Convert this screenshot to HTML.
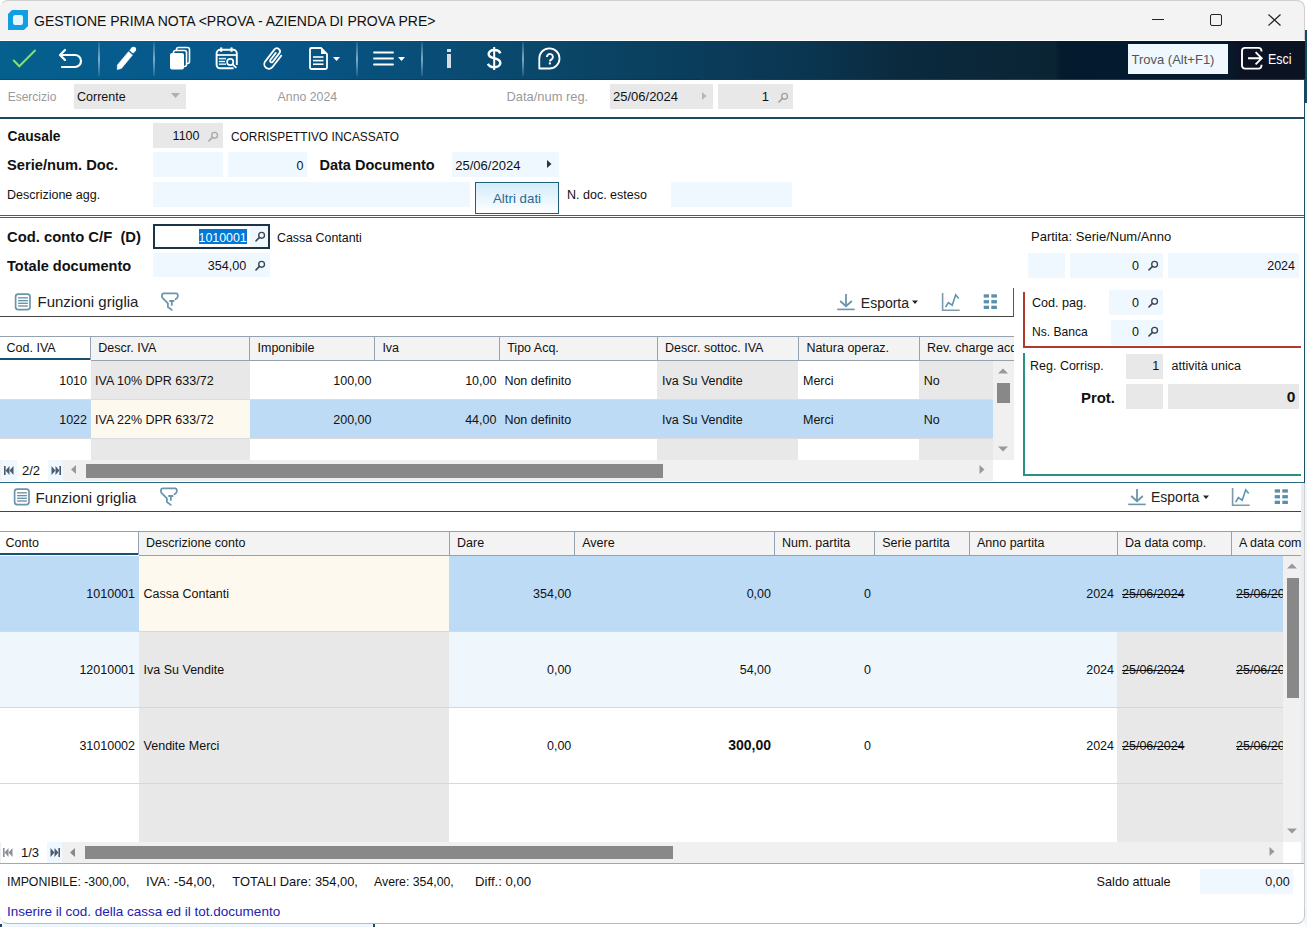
<!DOCTYPE html>
<html><head><meta charset="utf-8"><style>
*{margin:0;padding:0;box-sizing:border-box}
html,body{width:1307px;height:927px;overflow:hidden;background:#fff}
body{position:relative;font-family:"Liberation Sans",sans-serif}
.a{position:absolute}
.t{position:absolute;white-space:nowrap;line-height:1;font-family:"Liberation Sans",sans-serif}
svg{display:block}
</style></head><body>
<div class="a" style="left:1304px;top:30px;width:3px;height:73px;background:#164862"></div>
<div class="a" style="left:1304px;top:103px;width:3px;height:824px;background:#eef7fd"></div>
<div class="a" style="left:0;top:0;width:1305px;height:41px;background:#f3f3f3;border:1px solid #cfcfcf;border-left-color:transparent;border-bottom:none;border-radius:8px 8px 0 0"></div>
<div class="a" style="left:0px;top:40px;width:1305px;height:1px;background:#ffffff"></div>
<svg class="a" style="left:8px;top:10px" width="20" height="20" viewBox="0 0 20 20"><path d="M4 0H20V16L16 20H0V4Z" fill="#129ee2"/><rect x="5" y="5" width="10" height="10" rx="2.2" fill="#e6f6ff"/></svg>
<div class="t" style="left:34px;top:14px;font-size:14px;color:#111;">GESTIONE PRIMA NOTA &lt;PROVA - AZIENDA DI PROVA PRE&gt;</div>
<div class="a" style="left:1152px;top:19px;width:12px;height:1px;background:#222"></div>
<div class="a" style="left:1210px;top:14px;width:12px;height:12px;border:1.3px solid #222;border-radius:2px"></div>
<svg class="a" style="left:1268px;top:14px" width="13" height="12" viewBox="0 0 13 12"><path d="M0.5 0.5L12.5 11.5M12.5 0.5L0.5 11.5" stroke="#222" stroke-width="1.2"/></svg>
<div class="a" style="left:0;top:41px;width:1305px;height:39px;background:linear-gradient(90deg,#05608e 0px,#07578a 250px,#0a4668 560px,#0a3652 800px,#0b2a3e 900px,#0a2434 1055px,#041b2e 1060px,#031a30 1128px,#061a2e 1228px,#0b1323 1240px,#0b1323 1305px)"></div>
<div class="a" style="left:0px;top:79px;width:700px;height:1px;background:rgba(0,30,60,0.25)"></div>
<div class="a" style="left:700px;top:79px;width:605px;height:1px;background:linear-gradient(90deg,rgba(20,90,115,0),rgba(20,90,115,0.7) 300px)"></div>
<div class="a" style="left:97.5px;top:42px;width:2px;height:34px;background:linear-gradient(180deg,rgba(150,190,215,0.15),rgba(160,200,225,0.75) 50%,rgba(150,190,215,0.15))"></div>
<div class="a" style="left:152.5px;top:42px;width:2px;height:34px;background:linear-gradient(180deg,rgba(150,190,215,0.15),rgba(160,200,225,0.75) 50%,rgba(150,190,215,0.15))"></div>
<div class="a" style="left:355.5px;top:42px;width:2px;height:34px;background:linear-gradient(180deg,rgba(150,190,215,0.15),rgba(160,200,225,0.75) 50%,rgba(150,190,215,0.15))"></div>
<div class="a" style="left:420.5px;top:42px;width:2px;height:34px;background:linear-gradient(180deg,rgba(150,190,215,0.15),rgba(160,200,225,0.75) 50%,rgba(150,190,215,0.15))"></div>
<div class="a" style="left:521.5px;top:42px;width:2px;height:34px;background:linear-gradient(180deg,rgba(150,190,215,0.15),rgba(160,200,225,0.75) 50%,rgba(150,190,215,0.15))"></div>
<svg class="a" style="left:12px;top:48px" width="26" height="22" viewBox="0 0 26 22"><path d="M1.8 12.5L7.3 18.2L23 2.5" fill="none" stroke="#80de72" stroke-width="2.1" stroke-linecap="round"/></svg>
<svg class="a" style="left:58px;top:48px" width="26" height="22" viewBox="0 0 26 22"><path d="M7 2L2 7L7 12M2 7H17A6 6 0 0 1 17 19H4" fill="none" stroke="#fff" stroke-width="2.2" stroke-linecap="round" stroke-linejoin="round"/></svg>
<svg class="a" style="left:115px;top:46px" width="22" height="25" viewBox="0 0 22 25"><path d="M2.3 23.5L2.4 19L13.5 5.7L17.5 9.1L6.4 22.4Z" fill="#fff" stroke="#fff" stroke-width="0.6" stroke-linejoin="round"/><line x1="16.3" y1="6.0" x2="18.6" y2="3.2" stroke="#fff" stroke-width="5"/><circle cx="18.6" cy="3.2" r="2.5" fill="#fff"/></svg>
<svg class="a" style="left:168px;top:46px" width="26" height="25" viewBox="0 0 26 25"><rect x="8.5" y="1.5" width="13" height="16" rx="2" fill="none" stroke="#fff" stroke-width="1.6"/><rect x="5.5" y="4.5" width="13" height="16" rx="2" fill="#0a5482" stroke="#fff" stroke-width="1.6"/><rect x="2" y="7" width="14" height="16.5" rx="2" fill="#fff"/></svg>
<svg class="a" style="left:214px;top:46px" width="26" height="25" viewBox="0 0 26 25"><path d="M22.8 19V7.3A3.5 3.5 0 0 0 19.3 3.8H6.1A3.5 3.5 0 0 0 2.6 7.3V18.8A3.5 3.5 0 0 0 6.1 22.3H19.5" fill="none" stroke="#fff" stroke-width="1.9"/><line x1="2.6" y1="9" x2="22.8" y2="9" stroke="#fff" stroke-width="1.7"/><line x1="7.2" y1="1.4" x2="7.2" y2="5.8" stroke="#fff" stroke-width="2.1"/><line x1="17.5" y1="1.4" x2="17.5" y2="5.8" stroke="#fff" stroke-width="2.1"/><line x1="4.9" y1="12.6" x2="12" y2="12.6" stroke="#dfeef6" stroke-width="1.6"/><line x1="4.9" y1="15.5" x2="11" y2="15.5" stroke="#fff" stroke-width="1.4"/><line x1="4.9" y1="18.2" x2="12" y2="18.2" stroke="#c4e8f8" stroke-width="1.6"/><circle cx="16.2" cy="16" r="3.1" fill="none" stroke="#fff" stroke-width="1.7"/><line x1="18.6" y1="18.4" x2="22.4" y2="21.8" stroke="#fff" stroke-width="1.8"/></svg>
<svg class="a" style="left:258px;top:44px" width="30" height="30" viewBox="0 0 30 30"><path d="M23.3 11.6L14.33 23.21A4.6 4.6 0 0 1 7.07 17.59L16.52 5.35A3.1 3.1 0 0 1 21.42 9.13L14.71 17.82A1.5 1.5 0 0 1 12.34 15.99L17.83 8.88" fill="none" stroke="#fff" stroke-width="1.8" stroke-linecap="round"/></svg>
<svg class="a" style="left:308px;top:46px" width="34" height="25" viewBox="0 0 34 25"><path d="M3.5 2H13L19 8V21.5A1.5 1.5 0 0 1 17.5 23H3.5A1.5 1.5 0 0 1 2 21.5V3.5A1.5 1.5 0 0 1 3.5 2Z" fill="none" stroke="#fff" stroke-width="1.8"/><path d="M13 2V8H19Z" fill="#fff"/><line x1="5" y1="11" x2="15.5" y2="11" stroke="#fff" stroke-width="1.6"/><line x1="5" y1="14.6" x2="15.5" y2="14.6" stroke="#fff" stroke-width="1.6"/><line x1="5" y1="18.2" x2="15.5" y2="18.2" stroke="#fff" stroke-width="1.6"/><path d="M25 11H32L28.5 15Z" fill="#fff"/></svg>
<svg class="a" style="left:372px;top:46px" width="36" height="25" viewBox="0 0 36 25"><line x1="2" y1="6.5" x2="21" y2="6.5" stroke="#fff" stroke-width="1.8" stroke-linecap="round"/><line x1="2" y1="12.5" x2="21" y2="12.5" stroke="#fff" stroke-width="1.8" stroke-linecap="round"/><line x1="2" y1="18.5" x2="21" y2="18.5" stroke="#fff" stroke-width="1.8" stroke-linecap="round"/><path d="M26 11H33L29.5 15Z" fill="#fff"/></svg>
<div class="a" style="left:447px;top:49px;width:4px;height:3px;background:#d4dde6"></div>
<div class="a" style="left:447px;top:54px;width:4px;height:14px;background:#d4dde6"></div>
<svg class="a" style="left:487px;top:47px" width="15" height="24" viewBox="0 0 15 24"><line x1="7.2" y1="0" x2="7.2" y2="23" stroke="#fff" stroke-width="2"/><path d="M13.3 6.3C12.5 4 10 3 7.2 3C3.8 3 1.7 4.7 1.7 7C1.7 9.7 4.2 10.6 7.2 11.3C10.6 12 13.3 13.2 13.3 16C13.3 18.6 10.6 20.2 7.2 20.2C4 20.2 1.8 19 0.9 16.8" fill="none" stroke="#fff" stroke-width="2.5"/></svg>
<svg class="a" style="left:537px;top:46px" width="26" height="25" viewBox="0 0 26 25"><path d="M2.3 22.5V12.4A10.1 10.1 0 1 1 12.4 22.5Z" fill="none" stroke="#fff" stroke-width="1.8" stroke-linejoin="round"/><path d="M9.9 10.9A3 3 0 1 1 14.6 13.4C13.5 14 12.9 14.4 12.9 15.6" fill="none" stroke="#fff" stroke-width="1.9"/><circle cx="12.9" cy="17.5" r="1.15" fill="#fff"/></svg>
<div class="a" style="left:1128px;top:44px;width:100px;height:30px;background:#f0f8ff"></div>
<div class="t" style="left:1131.5px;top:53px;font-size:13px;color:#555;">Trova (Alt+F1)</div>
<svg class="a" style="left:1240px;top:46px" width="24" height="25" viewBox="0 0 24 25"><path d="M21.5 5.6V4.9A3 3 0 0 0 18.5 1.9H5A3 3 0 0 0 2 4.9V19.6A3 3 0 0 0 5 22.6H18.5A3 3 0 0 0 21.5 19.6V18.8" fill="none" stroke="#fff" stroke-width="1.9"/><path d="M8 12.3H21.5M15.6 6.2L21.7 12.3L15.6 18.4" fill="none" stroke="#fff" stroke-width="1.9"/></svg>
<div class="t" style="left:1268px;top:51px;font-size:15px;color:#fff;transform:scaleX(0.83);transform-origin:left">Esci</div>
<div class="t" style="left:7.7px;top:91px;font-size:12px;color:#9a9a9a;">Esercizio</div>
<div class="a" style="left:74px;top:84px;width:112px;height:25px;background:#e8e8e8"></div>
<div class="t" style="left:77px;top:91px;font-size:12.5px;color:#111;">Corrente</div>
<svg class="a" style="left:171px;top:93px" width="10" height="6"><path d="M0 0H9L4.5 5Z" fill="#b0b0b0"/></svg>
<div class="t" style="left:277.6px;top:91px;font-size:12.3px;color:#9a9a9a;">Anno 2024</div>
<div class="t" style="left:506.5px;top:91px;font-size:12.9px;color:#9a9a9a;">Data/num reg.</div>
<div class="a" style="left:610px;top:84px;width:103px;height:25px;background:#e8e8e8"></div>
<div class="t" style="left:613px;top:90px;font-size:13px;color:#111;">25/06/2024</div>
<svg class="a" style="left:702px;top:92px" width="5" height="9"><path d="M0 0V8L4.5 4Z" fill="#b8b8b8"/></svg>
<div class="a" style="left:718px;top:84px;width:75px;height:25px;background:#e8e8e8"></div>
<div class="t" style="right:538px;top:90px;font-size:13px;color:#111;">1</div>
<div class="a" style="left:778px;top:91px;width:12px;height:12px"><svg width="12" height="12" viewBox="0 0 12 12"><circle cx="6.6" cy="5.3" r="2.9" fill="none" stroke="#a0a0a0" stroke-width="1.35"/><line x1="4.5" y1="7.4" x2="1" y2="10.9" stroke="#a0a0a0" stroke-width="1.5" stroke-linecap="round"/></svg></div>
<div class="a" style="left:0px;top:117px;width:1304px;height:2px;background:#1d4a60"></div>
<div class="a" style="left:1304px;top:102px;width:1px;height:381px;background:#1d4a60"></div>
<div class="a" style="left:1301px;top:483px;width:4px;height:381px;background:#ececec"></div>
<div class="t" style="left:7.5px;top:130px;font-size:13.8px;color:#111;font-weight:bold;">Causale</div>
<div class="a" style="left:153px;top:123px;width:70px;height:25px;background:#e8e8e8"></div>
<div class="t" style="right:1107.5px;top:130px;font-size:12.5px;color:#111;">1100</div>
<div class="a" style="left:208px;top:130px;width:12px;height:12px"><svg width="12" height="12" viewBox="0 0 12 12"><circle cx="6.6" cy="5.3" r="2.9" fill="none" stroke="#a8a8a8" stroke-width="1.35"/><line x1="4.5" y1="7.4" x2="1" y2="10.9" stroke="#a8a8a8" stroke-width="1.5" stroke-linecap="round"/></svg></div>
<div class="t" style="left:231px;top:132px;font-size:11.9px;color:#111;">CORRISPETTIVO INCASSATO</div>
<div class="t" style="left:7px;top:158px;font-size:14.7px;color:#111;font-weight:bold;">Serie/num. Doc.</div>
<div class="a" style="left:153px;top:152px;width:70px;height:25px;background:#f0f8ff"></div>
<div class="a" style="left:228px;top:152px;width:79px;height:25px;background:#f0f8ff"></div>
<div class="t" style="right:1003.5px;top:160px;font-size:12.5px;color:#111;">0</div>
<div class="t" style="left:319.5px;top:158px;font-size:14.5px;color:#111;font-weight:bold;">Data Documento</div>
<div class="a" style="left:452px;top:152px;width:107px;height:25px;background:#f0f8ff"></div>
<div class="t" style="left:455.3px;top:159px;font-size:13px;color:#111;">25/06/2024</div>
<svg class="a" style="left:547px;top:160px" width="5" height="9"><path d="M0 0V8L4.5 4Z" fill="#333"/></svg>
<div class="t" style="left:7px;top:189px;font-size:12.5px;color:#111;">Descrizione agg.</div>
<div class="a" style="left:153px;top:182px;width:317px;height:25px;background:#f0f8ff"></div>
<div class="a" style="left:475px;top:182px;width:84px;height:32px;border:1px solid #1f5f7a;background:linear-gradient(180deg,#d3ebfa,#ffffff)"></div>
<div class="t" style="left:493px;top:192px;font-size:13.3px;color:#2a6a90;">Altri dati</div>
<div class="t" style="left:567px;top:189px;font-size:12.5px;color:#111;">N. doc. esteso</div>
<div class="a" style="left:671px;top:182px;width:121px;height:25px;background:#f0f8ff"></div>
<div class="a" style="left:0px;top:215px;width:1304px;height:1px;background:#2a6a80"></div>
<div class="a" style="left:0px;top:217px;width:1304px;height:1px;background:#2a6a80"></div>
<div class="t" style="left:7px;top:230px;font-size:14.8px;color:#111;font-weight:bold;">Cod. conto C/F&nbsp;&nbsp;(D)</div>
<div class="a" style="left:153px;top:224px;width:117px;height:25px;border:2px solid #1c3448;background:#fff"></div>
<div class="a" style="left:250px;top:226px;width:18px;height:21px;background:#f0f8ff"></div>
<div class="a" style="left:198.5px;top:229px;width:48.2px;height:15px;background:#0078d7"></div>
<div class="t" style="left:198.5px;top:232px;font-size:12.4px;color:#fff;">1010001</div>
<div class="a" style="left:255px;top:230px;width:12px;height:12px"><svg width="12" height="12" viewBox="0 0 12 12"><circle cx="6.6" cy="5.3" r="2.9" fill="none" stroke="#3a4452" stroke-width="1.35"/><line x1="4.5" y1="7.4" x2="1" y2="10.9" stroke="#3a4452" stroke-width="1.5" stroke-linecap="round"/></svg></div>
<div class="t" style="left:277px;top:232px;font-size:12.4px;color:#111;">Cassa Contanti</div>
<div class="t" style="left:7px;top:259px;font-size:14.56px;color:#111;font-weight:bold;">Totale documento</div>
<div class="a" style="left:153px;top:253px;width:117px;height:24px;background:#f0f8ff"></div>
<div class="t" style="right:1060.7px;top:260px;font-size:12.6px;color:#111;">354,00</div>
<div class="a" style="left:255px;top:259px;width:12px;height:12px"><svg width="12" height="12" viewBox="0 0 12 12"><circle cx="6.6" cy="5.3" r="2.9" fill="none" stroke="#3a4452" stroke-width="1.35"/><line x1="4.5" y1="7.4" x2="1" y2="10.9" stroke="#3a4452" stroke-width="1.5" stroke-linecap="round"/></svg></div>
<div class="t" style="left:1031px;top:230px;font-size:13px;color:#111;">Partita: Serie/Num/Anno</div>
<div class="a" style="left:1028px;top:253px;width:37px;height:25px;background:#f0f8ff"></div>
<div class="a" style="left:1070px;top:253px;width:93px;height:25px;background:#f0f8ff"></div>
<div class="t" style="right:168px;top:260px;font-size:12.5px;color:#111;">0</div>
<div class="a" style="left:1148px;top:259px;width:12px;height:12px"><svg width="12" height="12" viewBox="0 0 12 12"><circle cx="6.6" cy="5.3" r="2.9" fill="none" stroke="#3a4452" stroke-width="1.35"/><line x1="4.5" y1="7.4" x2="1" y2="10.9" stroke="#3a4452" stroke-width="1.5" stroke-linecap="round"/></svg></div>
<div class="a" style="left:1168px;top:253px;width:131px;height:25px;background:#f0f8ff"></div>
<div class="t" style="right:12px;top:260px;font-size:12.5px;color:#111;">2024</div>
<div class="a" style="left:0;top:288px;width:1014px;height:29px;border-right:1px solid #555;border-bottom:1px solid #444"></div>
<div class="a" style="left:12px;top:291px;line-height:0"><svg width="22" height="22" viewBox="0 0 22 22"><rect x="3.6" y="3.1" width="14.4" height="15.5" rx="2.6" fill="none" stroke="#6b95aa" stroke-width="1.7"/><rect x="6.1" y="9.5" width="9.8" height="2.9" fill="#c4e6f7"/><line x1="6.1" y1="6.8" x2="15.9" y2="6.8" stroke="#7f9aaa" stroke-width="1.5"/><line x1="6.1" y1="9.5" x2="15.9" y2="9.5" stroke="#6b8ea2" stroke-width="1.1"/><line x1="6.1" y1="12.4" x2="15.9" y2="12.4" stroke="#6b8ea2" stroke-width="1.1"/><line x1="6.1" y1="15" x2="15.9" y2="15" stroke="#7f9aaa" stroke-width="1.5"/></svg></div>
<div class="t" style="left:37.5px;top:294px;font-size:15px;color:#222;">Funzioni griglia</div>
<div class="a" style="left:160px;top:291px;line-height:0"><svg width="20" height="22" viewBox="0 0 20 22"><path d="M15.5 8.2C17 7.2 17.8 6.5 17.8 5.4V4.3C17.8 3.2 17.2 2.3 16 2.3H3.8C2.7 2.3 2 3.2 2 4.3V5.8C2 6.2 2.2 6.5 2.5 6.8L7.9 12.4V16L11.8 18.9" fill="none" stroke="#6b95aa" stroke-width="1.8" stroke-linecap="round" stroke-linejoin="round"/><path d="M9.3 10H14.3M11.8 10V14.7" fill="none" stroke="#6b95aa" stroke-width="1.8"/></svg></div>
<div class="a" style="left:837px;top:291px;line-height:0"><svg width="20" height="20" viewBox="0 0 20 20"><path d="M9 3V15M3.2 10L9 15.2L14.8 10" fill="none" stroke="#6b95aa" stroke-width="1.8"/><line x1="0.2" y1="18.4" x2="17.7" y2="18.4" stroke="#6b95aa" stroke-width="1.6"/></svg></div>
<div class="t" style="left:860.8px;top:296px;font-size:14px;color:#222;">Esporta</div>
<svg class="a" style="left:912px;top:300px" width="7" height="5"><path d="M0 0.5H6L3 4Z" fill="#222"/></svg>
<div class="a" style="left:940px;top:291px;line-height:0"><svg width="20" height="20" viewBox="0 0 20 20"><path d="M2.6 2V19.2H19.7" fill="none" stroke="#7d9aab" stroke-width="1.6"/><path d="M5.6 16.2L8.4 11.6L12.2 14.2L15.7 3.8L18.7 7.6" fill="none" stroke="#5a94b0" stroke-width="1.6"/></svg></div>
<div class="a" style="left:983px;top:293px;line-height:0"><svg width="16" height="18" viewBox="0 0 16 18"><g fill="#5a90aa"><rect x="0.7" y="1.3" width="5.3" height="3.3"/><rect x="8.3" y="1.3" width="5.6" height="3.3"/><rect x="0.7" y="7.1" width="5.3" height="3.3"/><rect x="8.3" y="7.1" width="5.6" height="3.3"/><rect x="0.7" y="12.7" width="5.3" height="3.3"/><rect x="8.3" y="12.7" width="5.6" height="3.3"/></g></svg></div>
<div class="a" style="left:1023px;top:292px;width:278px;height:56px;border-left:2px solid #b03a2e;border-bottom:2px solid #b03a2e"></div>
<div class="t" style="left:1032px;top:297px;font-size:12.6px;color:#111;">Cod. pag.</div>
<div class="a" style="left:1109px;top:290px;width:54px;height:25px;background:#f0f8ff"></div>
<div class="t" style="right:168px;top:297px;font-size:12.5px;color:#111;">0</div>
<div class="a" style="left:1148px;top:296px;width:12px;height:12px"><svg width="12" height="12" viewBox="0 0 12 12"><circle cx="6.6" cy="5.3" r="2.9" fill="none" stroke="#3a4452" stroke-width="1.35"/><line x1="4.5" y1="7.4" x2="1" y2="10.9" stroke="#3a4452" stroke-width="1.5" stroke-linecap="round"/></svg></div>
<div class="t" style="left:1032px;top:326px;font-size:12.1px;color:#111;">Ns. Banca</div>
<div class="a" style="left:1111px;top:320px;width:52px;height:25px;background:#f0f8ff"></div>
<div class="t" style="right:168px;top:326px;font-size:12.5px;color:#111;">0</div>
<div class="a" style="left:1148px;top:325px;width:12px;height:12px"><svg width="12" height="12" viewBox="0 0 12 12"><circle cx="6.6" cy="5.3" r="2.9" fill="none" stroke="#3a4452" stroke-width="1.35"/><line x1="4.5" y1="7.4" x2="1" y2="10.9" stroke="#3a4452" stroke-width="1.5" stroke-linecap="round"/></svg></div>
<div class="a" style="left:1023px;top:353px;width:278px;height:123px;border-left:2px solid #2a9080;border-bottom:2px solid #2a9080"></div>
<div class="t" style="left:1030px;top:360px;font-size:12.5px;color:#111;">Reg. Corrisp.</div>
<div class="a" style="left:1126px;top:354px;width:37px;height:25px;background:#e8e8e8"></div>
<div class="t" style="right:147.70000000000005px;top:360px;font-size:12.5px;color:#111;">1</div>
<div class="t" style="left:1171.5px;top:360px;font-size:12.5px;color:#111;">attivit&agrave; unica</div>
<div class="t" style="left:1081px;top:391px;font-size:14.9px;color:#111;font-weight:bold;">Prot.</div>
<div class="a" style="left:1126px;top:384px;width:37px;height:25px;background:#e8e8e8"></div>
<div class="a" style="left:1168px;top:384px;width:131px;height:25px;background:#e8e8e8"></div>
<div class="t" style="right:11.700000000000045px;top:389px;font-size:15.5px;color:#111;font-weight:bold;">0</div>
<div class="a" style="left:0px;top:336px;width:1014px;height:1px;background:#94a2b2"></div>
<div class="a" style="left:0px;top:337px;width:1014px;height:23px;background:#f3f3f3"></div>
<div class="a" style="left:0px;top:337px;width:91px;height:23px;background:#fff"></div>
<div class="a" style="left:0px;top:358px;width:90px;height:2px;background:#145070"></div>
<div class="a" style="left:91px;top:360px;width:923px;height:1px;background:#94a2b2"></div>
<div class="a" style="left:90px;top:337px;width:1px;height:23px;background:#94a2b2"></div>
<div class="a" style="left:249px;top:337px;width:1px;height:23px;background:#94a2b2"></div>
<div class="a" style="left:374px;top:337px;width:1px;height:23px;background:#94a2b2"></div>
<div class="a" style="left:499px;top:337px;width:1px;height:23px;background:#94a2b2"></div>
<div class="a" style="left:657px;top:337px;width:1px;height:23px;background:#94a2b2"></div>
<div class="a" style="left:798px;top:337px;width:1px;height:23px;background:#94a2b2"></div>
<div class="a" style="left:919px;top:337px;width:1px;height:23px;background:#94a2b2"></div>
<div class="a" style="left:0;top:337px;width:1014px;height:23px;overflow:hidden">
<div class="t" style="left:6.6px;top:5px;font-size:12.5px;color:#111">Cod. IVA</div>
<div class="t" style="left:98.3px;top:5px;font-size:12.5px;color:#111">Descr. IVA</div>
<div class="t" style="left:257.5px;top:5px;font-size:12.5px;color:#111">Imponibile</div>
<div class="t" style="left:382.4px;top:5px;font-size:12.5px;color:#111">Iva</div>
<div class="t" style="left:507.2px;top:5px;font-size:12.5px;color:#111">Tipo Acq.</div>
<div class="t" style="left:665px;top:5px;font-size:12.5px;color:#111">Descr. sottoc. IVA</div>
<div class="t" style="left:806.4px;top:5px;font-size:12.5px;color:#111">Natura operaz.</div>
<div class="t" style="left:927px;top:5px;font-size:12.5px;color:#111">Rev. charge acq</div>
</div>
<div class="a" style="left:0px;top:361px;width:993px;height:38px;background:#fff"></div>
<div class="a" style="left:91px;top:361px;width:159px;height:38px;background:#e8e8e8"></div>
<div class="a" style="left:657px;top:361px;width:141px;height:38px;background:#e8e8e8"></div>
<div class="a" style="left:919px;top:361px;width:74px;height:38px;background:#e8e8e8"></div>
<div class="a" style="left:0px;top:400px;width:993px;height:38px;background:#bedbf6"></div>
<div class="a" style="left:91px;top:400px;width:159px;height:38px;background:#fdf9ef"></div>
<div class="a" style="left:0px;top:399px;width:993px;height:1px;background:#dcdcdc"></div>
<div class="a" style="left:0px;top:438px;width:993px;height:1px;background:#dcdcdc"></div>
<div class="a" style="left:91px;top:439px;width:159px;height:21px;background:#e8e8e8"></div>
<div class="a" style="left:657px;top:439px;width:141px;height:21px;background:#e8e8e8"></div>
<div class="a" style="left:919px;top:439px;width:74px;height:21px;background:#e8e8e8"></div>
<div class="t" style="right:1220px;top:375px;font-size:12.5px;color:#111;">1010</div>
<div class="t" style="left:95px;top:375px;font-size:12.5px;color:#111;">IVA 10% DPR 633/72</div>
<div class="t" style="right:935.5px;top:375px;font-size:12.5px;color:#111;">100,00</div>
<div class="t" style="right:810.6px;top:375px;font-size:12.5px;color:#111;">10,00</div>
<div class="t" style="left:504.4px;top:375px;font-size:12.5px;color:#111;">Non definito</div>
<div class="t" style="left:662px;top:375px;font-size:12.5px;color:#111;">Iva Su Vendite</div>
<div class="t" style="left:803px;top:375px;font-size:12.5px;color:#111;">Merci</div>
<div class="t" style="left:923.8px;top:375px;font-size:12.5px;color:#111;">No</div>
<div class="t" style="right:1220px;top:414px;font-size:12.5px;color:#111;">1022</div>
<div class="t" style="left:95px;top:414px;font-size:12.5px;color:#111;">IVA 22% DPR 633/72</div>
<div class="t" style="right:935.5px;top:414px;font-size:12.5px;color:#111;">200,00</div>
<div class="t" style="right:810.6px;top:414px;font-size:12.5px;color:#111;">44,00</div>
<div class="t" style="left:504.4px;top:414px;font-size:12.5px;color:#111;">Non definito</div>
<div class="t" style="left:662px;top:414px;font-size:12.5px;color:#111;">Iva Su Vendite</div>
<div class="t" style="left:803px;top:414px;font-size:12.5px;color:#111;">Merci</div>
<div class="t" style="left:923.8px;top:414px;font-size:12.5px;color:#111;">No</div>
<div class="a" style="left:993px;top:361px;width:21px;height:99px;background:#f0f0f0"></div>
<svg class="a" style="left:998px;top:368px" width="11" height="6"><path d="M0 5.5H10L5 0.5Z" fill="#999"/></svg>
<div class="a" style="left:997px;top:383px;width:13px;height:20px;background:#888"></div>
<svg class="a" style="left:998px;top:446px" width="11" height="6"><path d="M0 0.5H10L5 5.5Z" fill="#999"/></svg>
<div class="a" style="left:0px;top:460px;width:993px;height:21px;background:#f0f0f0"></div>
<div class="a" style="left:993px;top:460px;width:21px;height:21px;background:#fff"></div>
<div class="a" style="left:1px;top:460px;width:16px;height:21px;background:#f0f8ff"></div>
<div class="a" style="left:17px;top:460px;width:31px;height:21px;background:#fff"></div>
<div class="a" style="left:48px;top:460px;width:15px;height:21px;background:#f0f8ff"></div>
<div class="a" style="left:3.7px;top:466px;line-height:0"><svg width="10" height="9" viewBox="0 0 10 9"><rect x="0" y="0" width="1.6" height="9" fill="#4a5a72"/><path d="M5.5 0V9L1.6 4.5Z" fill="#4a5a72"/><path d="M9.5 0V9L5.6 4.5Z" fill="#4a5a72"/></svg></div>
<div class="t" style="left:22px;top:464px;font-size:13px;color:#111;">2/2</div>
<div class="a" style="left:50.8px;top:466px;line-height:0"><svg width="10" height="9" viewBox="0 0 10 9"><path d="M0.5 0V9L4.4 4.5Z" fill="#4a5a72"/><path d="M4.5 0V9L8.4 4.5Z" fill="#4a5a72"/><rect x="8.4" y="0" width="1.6" height="9" fill="#4a5a72"/></svg></div>
<svg class="a" style="left:70px;top:465px" width="7" height="10"><path d="M6 0V9L1 4.5Z" fill="#999"/></svg>
<div class="a" style="left:86px;top:464px;width:577px;height:14px;background:#888"></div>
<svg class="a" style="left:979px;top:465px" width="7" height="10"><path d="M0.5 0V9L5.5 4.5Z" fill="#999"/></svg>
<div class="a" style="left:0px;top:482px;width:1304px;height:1px;background:#2a6a80"></div>
<div class="a" style="left:10.5px;top:486px;line-height:0"><svg width="22" height="22" viewBox="0 0 22 22"><rect x="3.6" y="3.1" width="14.4" height="15.5" rx="2.6" fill="none" stroke="#6b95aa" stroke-width="1.7"/><rect x="6.1" y="9.5" width="9.8" height="2.9" fill="#c4e6f7"/><line x1="6.1" y1="6.8" x2="15.9" y2="6.8" stroke="#7f9aaa" stroke-width="1.5"/><line x1="6.1" y1="9.5" x2="15.9" y2="9.5" stroke="#6b8ea2" stroke-width="1.1"/><line x1="6.1" y1="12.4" x2="15.9" y2="12.4" stroke="#6b8ea2" stroke-width="1.1"/><line x1="6.1" y1="15" x2="15.9" y2="15" stroke="#7f9aaa" stroke-width="1.5"/></svg></div>
<div class="t" style="left:35.5px;top:490px;font-size:15px;color:#222;">Funzioni griglia</div>
<div class="a" style="left:158.5px;top:486px;line-height:0"><svg width="20" height="22" viewBox="0 0 20 22"><path d="M15.5 8.2C17 7.2 17.8 6.5 17.8 5.4V4.3C17.8 3.2 17.2 2.3 16 2.3H3.8C2.7 2.3 2 3.2 2 4.3V5.8C2 6.2 2.2 6.5 2.5 6.8L7.9 12.4V16L11.8 18.9" fill="none" stroke="#6b95aa" stroke-width="1.8" stroke-linecap="round" stroke-linejoin="round"/><path d="M9.3 10H14.3M11.8 10V14.7" fill="none" stroke="#6b95aa" stroke-width="1.8"/></svg></div>
<div class="a" style="left:0px;top:511px;width:1301px;height:1px;background:#444"></div>
<div class="a" style="left:1128px;top:486px;line-height:0"><svg width="20" height="20" viewBox="0 0 20 20"><path d="M9 3V15M3.2 10L9 15.2L14.8 10" fill="none" stroke="#6b95aa" stroke-width="1.8"/><line x1="0.2" y1="18.4" x2="17.7" y2="18.4" stroke="#6b95aa" stroke-width="1.6"/></svg></div>
<div class="t" style="left:1151px;top:490px;font-size:14px;color:#222;">Esporta</div>
<svg class="a" style="left:1203px;top:495px" width="7" height="5"><path d="M0 0.5H6L3 4Z" fill="#222"/></svg>
<div class="a" style="left:1230px;top:486px;line-height:0"><svg width="20" height="20" viewBox="0 0 20 20"><path d="M2.6 2V19.2H19.7" fill="none" stroke="#7d9aab" stroke-width="1.6"/><path d="M5.6 16.2L8.4 11.6L12.2 14.2L15.7 3.8L18.7 7.6" fill="none" stroke="#5a94b0" stroke-width="1.6"/></svg></div>
<div class="a" style="left:1274px;top:488px;line-height:0"><svg width="16" height="18" viewBox="0 0 16 18"><g fill="#5a90aa"><rect x="0.7" y="1.3" width="5.3" height="3.3"/><rect x="8.3" y="1.3" width="5.6" height="3.3"/><rect x="0.7" y="7.1" width="5.3" height="3.3"/><rect x="8.3" y="7.1" width="5.6" height="3.3"/><rect x="0.7" y="12.7" width="5.3" height="3.3"/><rect x="8.3" y="12.7" width="5.6" height="3.3"/></g></svg></div>
<div class="a" style="left:0px;top:531px;width:1301px;height:1px;background:#94a2b2"></div>
<div class="a" style="left:0px;top:532px;width:1301px;height:23px;background:#f3f3f3"></div>
<div class="a" style="left:0px;top:532px;width:138px;height:23px;background:#fff"></div>
<div class="a" style="left:0px;top:553px;width:138px;height:2px;background:#145070"></div>
<div class="a" style="left:139px;top:555px;width:1162px;height:1px;background:#94a2b2"></div>
<div class="a" style="left:138px;top:532px;width:1px;height:23px;background:#94a2b2"></div>
<div class="a" style="left:449px;top:532px;width:1px;height:23px;background:#94a2b2"></div>
<div class="a" style="left:574px;top:532px;width:1px;height:23px;background:#94a2b2"></div>
<div class="a" style="left:774px;top:532px;width:1px;height:23px;background:#94a2b2"></div>
<div class="a" style="left:874px;top:532px;width:1px;height:23px;background:#94a2b2"></div>
<div class="a" style="left:969px;top:532px;width:1px;height:23px;background:#94a2b2"></div>
<div class="a" style="left:1117px;top:532px;width:1px;height:23px;background:#94a2b2"></div>
<div class="a" style="left:1231px;top:532px;width:1px;height:23px;background:#94a2b2"></div>
<div class="a" style="left:0;top:532px;width:1301px;height:23px;overflow:hidden">
<div class="t" style="left:5.5px;top:5px;font-size:12.5px;color:#111">Conto</div>
<div class="t" style="left:146px;top:5px;font-size:12.5px;color:#111">Descrizione conto</div>
<div class="t" style="left:457px;top:5px;font-size:12.5px;color:#111">Dare</div>
<div class="t" style="left:582.2px;top:5px;font-size:12.5px;color:#111">Avere</div>
<div class="t" style="left:782px;top:5px;font-size:12.5px;color:#111">Num. partita</div>
<div class="t" style="left:882.2px;top:5px;font-size:12.5px;color:#111">Serie partita</div>
<div class="t" style="left:977px;top:5px;font-size:12.5px;color:#111">Anno partita</div>
<div class="t" style="left:1125px;top:5px;font-size:12.5px;color:#111">Da data comp.</div>
<div class="t" style="left:1239px;top:5px;font-size:12.5px;color:#111">A data comp.</div>
</div>
<div class="a" style="left:0px;top:556px;width:1283px;height:75px;background:#bedbf6"></div>
<div class="a" style="left:139px;top:556px;width:310px;height:75px;background:#fdf9ef"></div>
<div class="a" style="left:0px;top:631px;width:1283px;height:1px;background:#d8d8d8"></div>
<div class="a" style="left:0px;top:632px;width:1283px;height:75px;background:#eff7fd"></div>
<div class="a" style="left:139px;top:632px;width:310px;height:75px;background:#e8e8e8"></div>
<div class="a" style="left:1117px;top:632px;width:166px;height:75px;background:#e8e8e8"></div>
<div class="a" style="left:0px;top:707px;width:1283px;height:1px;background:#d8d8d8"></div>
<div class="a" style="left:0px;top:708px;width:1283px;height:75px;background:#fff"></div>
<div class="a" style="left:139px;top:708px;width:310px;height:75px;background:#e8e8e8"></div>
<div class="a" style="left:1117px;top:708px;width:166px;height:75px;background:#e8e8e8"></div>
<div class="a" style="left:0px;top:783px;width:1283px;height:1px;background:#d8d8d8"></div>
<div class="a" style="left:139px;top:784px;width:310px;height:58px;background:#e8e8e8"></div>
<div class="a" style="left:1117px;top:784px;width:166px;height:58px;background:#e8e8e8"></div>
<div class="a" style="left:0;top:556px;width:1283px;height:286px;overflow:hidden">
<div class="t" style="right:1148px;top:32px;font-size:12.5px;color:#111;">1010001</div>
<div class="t" style="left:143.6px;top:32px;font-size:12.5px;color:#111;">Cassa Contanti</div>
<div class="t" style="right:711.7px;top:32px;font-size:12.5px;color:#111;">354,00</div>
<div class="t" style="right:512px;top:32px;font-size:12.5px;color:#111;">0,00</div>
<div class="t" style="right:412px;top:32px;font-size:12.5px;color:#111;">0</div>
<div class="t" style="right:169px;top:32px;font-size:12.5px;color:#111;">2024</div>
<div class="t" style="left:1122px;top:32px;font-size:12.5px;color:#111;text-decoration:line-through">25/06/2024</div>
<div class="t" style="left:1236px;top:32px;font-size:12.5px;color:#111;text-decoration:line-through">25/06/2024</div>
<div class="t" style="right:1148px;top:108px;font-size:12.5px;color:#111;">12010001</div>
<div class="t" style="left:143.6px;top:108px;font-size:12.5px;color:#111;">Iva Su Vendite</div>
<div class="t" style="right:711.7px;top:108px;font-size:12.5px;color:#111;">0,00</div>
<div class="t" style="right:512px;top:108px;font-size:12.5px;color:#111;">54,00</div>
<div class="t" style="right:412px;top:108px;font-size:12.5px;color:#111;">0</div>
<div class="t" style="right:169px;top:108px;font-size:12.5px;color:#111;">2024</div>
<div class="t" style="left:1122px;top:108px;font-size:12.5px;color:#111;text-decoration:line-through">25/06/2024</div>
<div class="t" style="left:1236px;top:108px;font-size:12.5px;color:#111;text-decoration:line-through">25/06/2024</div>
<div class="t" style="right:1148px;top:184px;font-size:12.5px;color:#111;">31010002</div>
<div class="t" style="left:143.6px;top:184px;font-size:12.5px;color:#111;">Vendite Merci</div>
<div class="t" style="right:711.7px;top:184px;font-size:12.5px;color:#111;">0,00</div>
<div class="t" style="right:512px;top:182px;font-size:14px;color:#111;font-weight:bold;">300,00</div>
<div class="t" style="right:412px;top:184px;font-size:12.5px;color:#111;">0</div>
<div class="t" style="right:169px;top:184px;font-size:12.5px;color:#111;">2024</div>
<div class="t" style="left:1122px;top:184px;font-size:12.5px;color:#111;text-decoration:line-through">25/06/2024</div>
<div class="t" style="left:1236px;top:184px;font-size:12.5px;color:#111;text-decoration:line-through">25/06/2024</div>
</div>
<div class="a" style="left:1283px;top:556px;width:18px;height:286px;background:#f0f0f0"></div>
<svg class="a" style="left:1287px;top:563px" width="11" height="6"><path d="M0 5.5H10L5 0.5Z" fill="#999"/></svg>
<div class="a" style="left:1287px;top:578px;width:12px;height:120px;background:#888"></div>
<svg class="a" style="left:1287px;top:828px" width="11" height="6"><path d="M0 0.5H10L5 5.5Z" fill="#999"/></svg>
<div class="a" style="left:0px;top:842px;width:1283px;height:21px;background:#f0f0f0"></div>
<div class="a" style="left:1px;top:842px;width:16px;height:21px;background:#fff"></div>
<div class="a" style="left:17px;top:842px;width:30px;height:21px;background:#fff"></div>
<div class="a" style="left:47px;top:842px;width:15px;height:21px;background:#f0f8ff"></div>
<div class="a" style="left:2.8px;top:848px;line-height:0"><svg width="10" height="9" viewBox="0 0 10 9"><rect x="0" y="0" width="1.6" height="9" fill="#8a8f96"/><path d="M5.5 0V9L1.6 4.5Z" fill="#8a8f96"/><path d="M9.5 0V9L5.6 4.5Z" fill="#8a8f96"/></svg></div>
<div class="t" style="left:21px;top:846px;font-size:13px;color:#111;">1/3</div>
<div class="a" style="left:50px;top:848px;line-height:0"><svg width="10" height="9" viewBox="0 0 10 9"><path d="M0.5 0V9L4.4 4.5Z" fill="#4a5a72"/><path d="M4.5 0V9L8.4 4.5Z" fill="#4a5a72"/><rect x="8.4" y="0" width="1.6" height="9" fill="#4a5a72"/></svg></div>
<svg class="a" style="left:69px;top:848px" width="7" height="10"><path d="M6 0V9L1 4.5Z" fill="#888"/></svg>
<div class="a" style="left:85px;top:846px;width:588px;height:13px;background:#888"></div>
<svg class="a" style="left:1269px;top:847px" width="7" height="10"><path d="M0.5 0V9L5.5 4.5Z" fill="#999"/></svg>
<div class="a" style="left:0px;top:863px;width:1304px;height:1px;background:#9aaabb"></div>
<div class="t" style="left:7px;top:876px;font-size:12.3px;color:#111;">IMPONIBILE: -300,00,</div>
<div class="t" style="left:146px;top:875px;font-size:13.3px;color:#111;">IVA: -54,00,</div>
<div class="t" style="left:232.3px;top:876px;font-size:12.9px;color:#111;">TOTALI Dare: 354,00,</div>
<div class="t" style="left:374px;top:876px;font-size:12.3px;color:#111;">Avere: 354,00,</div>
<div class="t" style="left:475px;top:875px;font-size:13.2px;color:#111;">Diff.: 0,00</div>
<div class="t" style="left:1096.6px;top:876px;font-size:12.7px;color:#111;">Saldo attuale</div>
<div class="a" style="left:1200px;top:869px;width:93px;height:25px;background:#f0f8ff"></div>
<div class="t" style="right:17.299999999999955px;top:876px;font-size:12.5px;color:#111;">0,00</div>
<div class="t" style="left:7px;top:905px;font-size:13.5px;color:#1e22b0;">Inserire il cod. della cassa ed il tot.documento</div>
<div class="a" style="left:0;top:923px;width:1305px;height:4px;background:#eef7fd"></div>
<div class="a" style="left:373px;top:923px;width:932px;height:4px;background:#fff"></div>
<div class="a" style="left:373px;top:923px;width:2px;height:4px;background:#1d4a60"></div>
<div class="a" style="left:0px;top:924px;width:2px;height:3px;background:#1d4a60"></div>
<div class="a" style="left:0;top:905px;width:1305px;height:19px;border-bottom:1px solid #bcbcbc;border-right:1px solid #c8c8c8;border-radius:0 0 8px 8px;background:transparent"></div>
<div class="a" style="left:1304px;top:483px;width:1px;height:425px;background:#cfcfcf"></div>
</body></html>
